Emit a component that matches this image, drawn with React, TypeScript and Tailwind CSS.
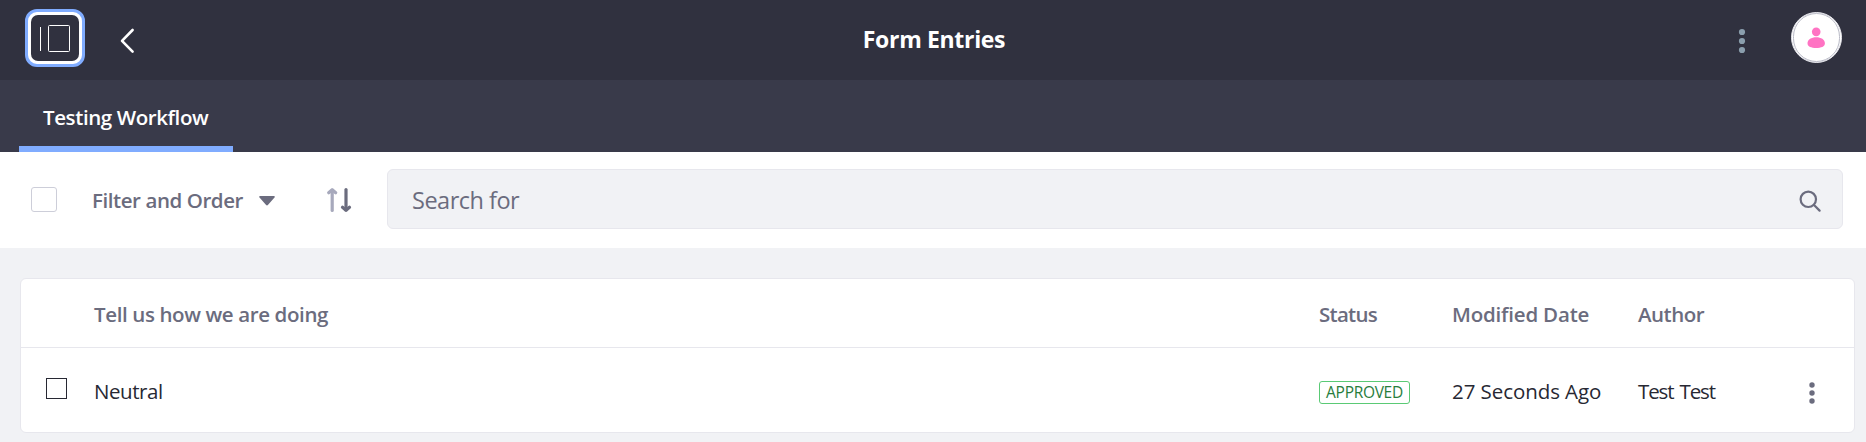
function PanelButton() {
  return (
    <button
      aria-label="Toggle product menu"
      className="flex h-[58px] w-[60px] shrink-0 items-center justify-center rounded-[12px] border-[3px] border-[#80acff] bg-white p-[3px]"
    >
      <span className="flex h-full w-full items-center justify-center rounded-[7px] bg-[#30313f]">
        <svg width="48" height="46" viewBox="0 0 48 46" fill="none" stroke="#fff" strokeWidth="1">
          <path d="M9.5 12v24" />
          <rect x="17.5" y="10.5" width="21" height="26" rx="1" />
        </svg>
      </span>
    </button>
  );
}

function Kebab({ color, r, gap }: { color: string; r: number; gap: number }) {
  return (
    <svg width="10" height="30" viewBox="-5 -15 10 30" fill={color}>
      <circle cx="0" cy={-gap} r={r} />
      <circle cx="0" cy="0" r={r} />
      <circle cx="0" cy={gap} r={r} />
    </svg>
  );
}

function Header() {
  return (
    <header className="grid h-20 grid-cols-[1fr_auto_1fr] bg-[#30313f]">
      <div className="flex items-start pl-[25px] pt-[9px]">
        <PanelButton />
        <svg className="ml-[34px] mt-[19px]" width="16" height="26" viewBox="0 0 16 26" fill="none" stroke="#fff" strokeWidth="2.6" strokeLinecap="round" strokeLinejoin="round">
          <path d="M13.6 2 3 12.8l10.6 10.8" />
        </svg>
      </div>
      <h1 className="pl-[2px] text-[23px] font-bold leading-[78px] tracking-[-0.33px] text-white">
        Form Entries
      </h1>
      <div className="flex items-start justify-end pr-[24px]">
        <span className="mr-[44px] mt-[26px]">
          <Kebab color="#8a9ead" r={3.1} gap={9} />
        </span>
        <span className="mt-[12px] flex h-[51px] w-[51px] items-center justify-center rounded-full border border-[#e7e7ed] bg-white p-px">
          <svg className="rounded-full border border-[#b9bac6]" width="49" height="49" viewBox="0 0 47 47" fill="#ff73c3">
            <circle cx="23.2" cy="17.6" r="4.5" />
            <path d="M14.1 29.500c0-3.800 4.100-6.200 9.100-6.200s9.100 2.400 9.100 6.200c0 3.600-4 4.900-9.100 4.900s-9.100-1.300-9.100-4.900Z" />
          </svg>
        </span>
      </div>
    </header>
  );
}

function Tabs() {
  return (
    <nav className="flex h-[72px] bg-[#393a4a] pl-[19px]">
      <a className="w-[214px] border-b-[6px] border-[#80acff] pl-[24px] pt-[4px] text-[20.5px] font-semibold leading-[66px] tracking-[-0.4px] text-white">
        Testing Workflow
      </a>
    </nav>
  );
}

function Toolbar() {
  return (
    <div className="flex h-24 items-center bg-white pl-[31px] pr-[23px]">
      <span className="mt-[-1px] h-[25px] w-[26px] shrink-0 rounded-[3px] border border-[#cdced9] bg-white" />
      <span className="ml-[35px] w-[153px] whitespace-nowrap text-[20.5px] font-semibold tracking-[-0.43px] text-[#6b6c7e]">
        Filter and Order
      </span>
      <svg className="ml-[14px] mt-[2px] shrink-0" width="16" height="10" viewBox="0 0 16 10" fill="#6b6c7e">
        <path d="M1.200 0h13.600c1 0 1.400.9.7 1.600L8.900 9c-.5.5-1.300.5-1.800 0L.5 1.600C-.2.9.2 0 1.200 0Z" />
      </svg>
      <svg className="ml-[51px] mt-[-1px] shrink-0" width="26" height="26" viewBox="0 0 26 26" fill="none" strokeWidth="3.2" strokeLinecap="round" strokeLinejoin="round">
        <g stroke="#a7a9bc">
          <path d="M6.200 3v20.500" />
          <path d="M2.700 5.800 6.200 2.800l3.500 3" />
        </g>
        <g stroke="#6b6c7e">
          <path d="M20 2.500V23" />
          <path d="M16.500 20.200 20 23.200l3.500-3" />
        </g>
      </svg>
      <div className="ml-[35px] mt-[-2px] flex h-[60px] flex-1 items-center justify-between rounded-[6px] border border-[#e7e7ed] bg-[#f1f2f5] pl-[24px] pr-[21px]">
        <span className="pt-[4px] text-[23.5px] tracking-[-0.5px] text-[#6b6c7e]">Search for</span>
        <svg className="mt-[3px]" width="22" height="22" viewBox="0 0 22 22" fill="none" stroke="#6b6c7e" strokeWidth="2.2" strokeLinecap="round">
          <circle cx="9.300" cy="9.300" r="7.700" />
          <path d="m15 15 5.600 5.600" />
        </svg>
      </div>
    </div>
  );
}

function EntriesTable() {
  return (
    <section className="ml-[20px] mr-[11px] mt-[30px] rounded-[6px] border border-[#e7e7ed] bg-white text-[20.5px]">
      <div className="grid h-[69px] grid-cols-[73px_1225px_133px_185px_1fr] items-center border-b border-[#e7e7ed] pt-[2px] font-semibold text-[#6b6c7e]">
        <span />
        <span className="tracking-[-0.38px]">Tell us how we are doing</span>
        <span className="tracking-[-0.72px]">Status</span>
        <span className="tracking-[-0.2px]">Modified Date</span>
        <span className="pl-px tracking-[-0.5px]">Author</span>
      </div>
      <div className="grid h-[84px] grid-cols-[73px_1225px_133px_185px_1fr] items-center text-[#272833]">
        <span className="ml-[25px] mt-[-3px] h-[21px] w-[21px] border border-[#272833]" />
        <span className="pt-[3px] tracking-[-0.45px]">Neutral</span>
        <span className="mt-[5px] flex h-[23px] w-[91px] items-center justify-center rounded-[3px] border border-[#5aca75] text-[15.5px] leading-[21px] tracking-[-0.3px] text-[#287d3c]">
          APPROVED
        </span>
        <span className="pt-[3px] tracking-[-0.07px]">27 Seconds Ago</span>
        <span className="flex items-center justify-between pl-px pr-[37px]">
          <span className="pt-[3px] tracking-[-1.1px] [word-spacing:1.800px]">Test Test</span>
          <span className="pt-[6px]">
            <Kebab color="#6b6c7e" r={2.7} gap={8} />
          </span>
        </span>
      </div>
    </section>
  );
}

export default function App() {
  return (
    <div className="h-[442px] w-full overflow-hidden bg-[#f1f2f5] font-['Open_Sans','Noto_Sans',sans-serif]">
      <Header />
      <Tabs />
      <Toolbar />
      <EntriesTable />
    </div>
  );
}
